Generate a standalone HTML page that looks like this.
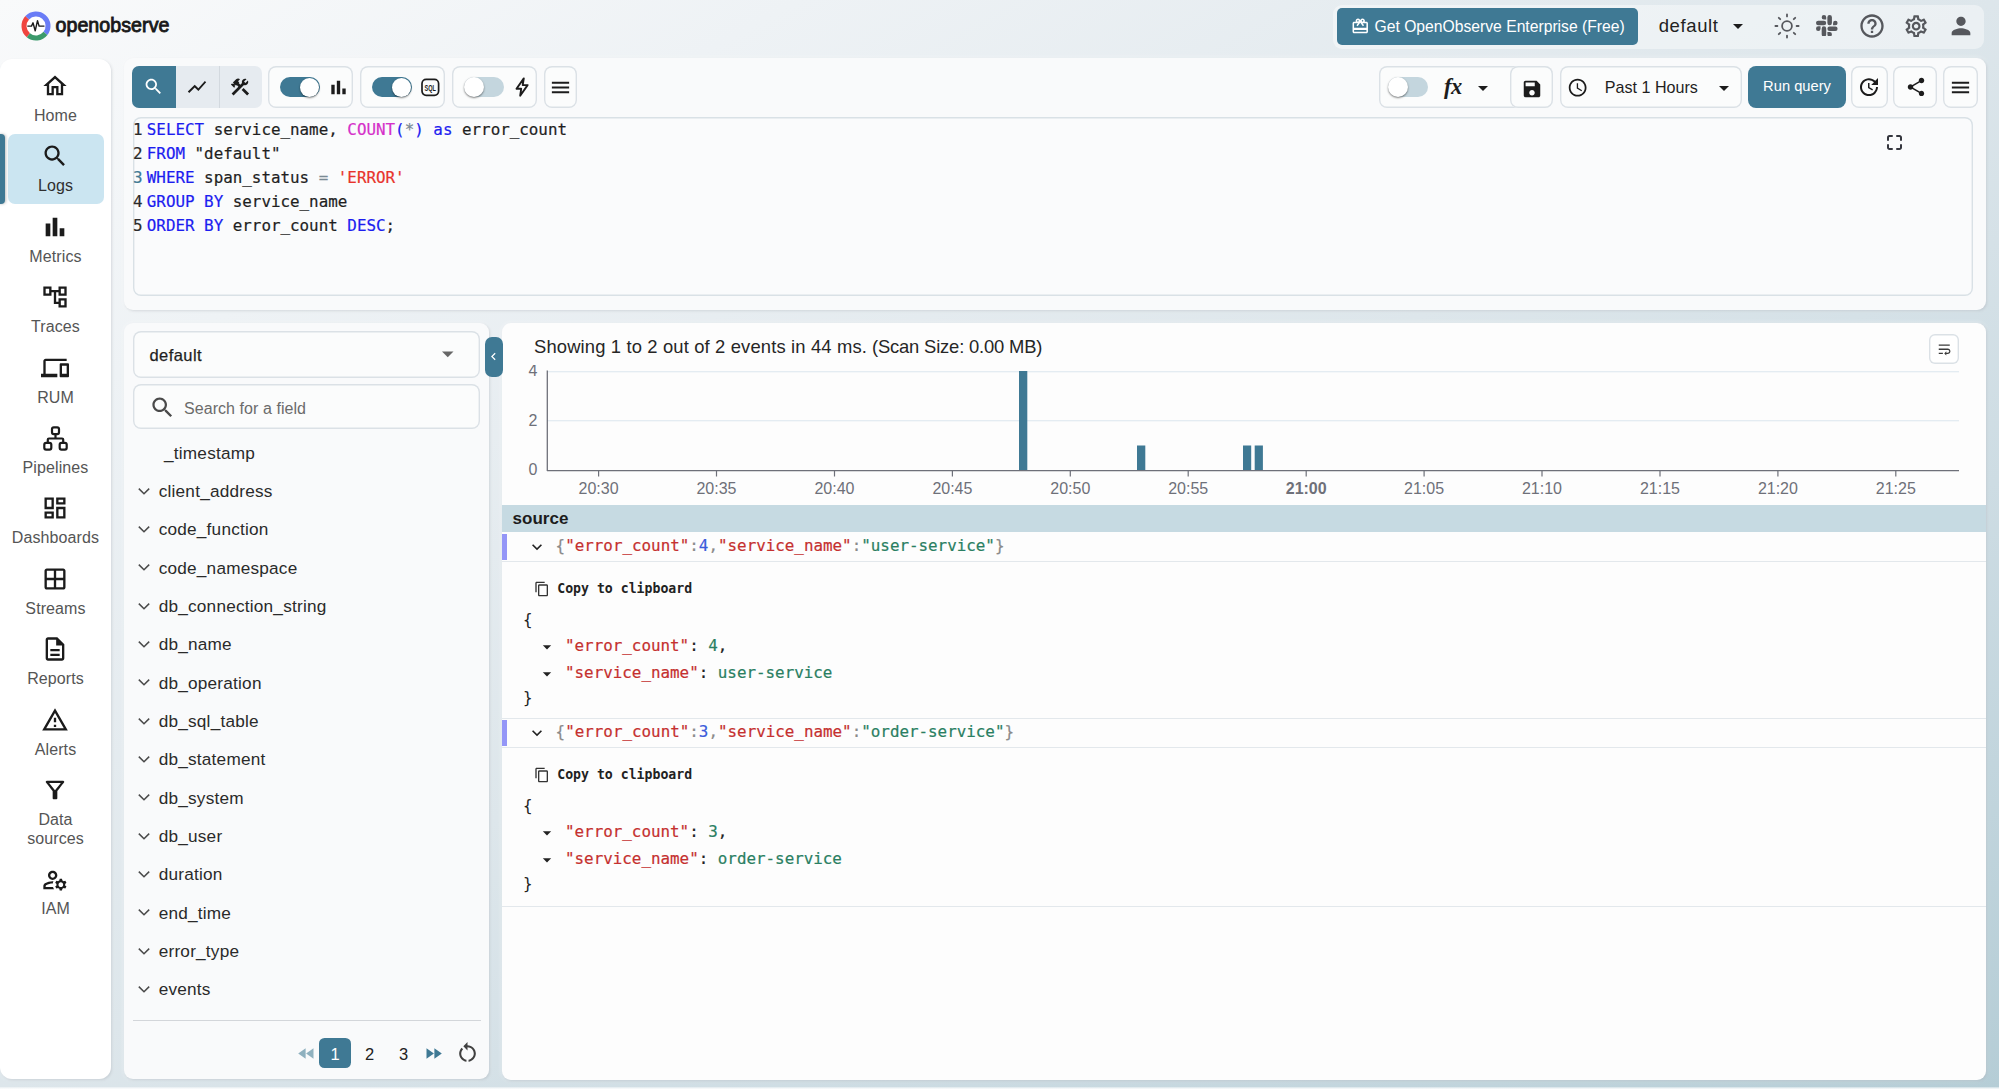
<!DOCTYPE html>
<html lang="en">
<head>
<meta charset="utf-8">
<title>OpenObserve - Logs</title>
<style>
*{box-sizing:border-box;margin:0;padding:0}
html,body{width:1999px;height:1089px;overflow:hidden}
body{font-family:"Liberation Sans",sans-serif;color:#222;position:relative;
 background:linear-gradient(to bottom right,#f9fafb 0%,#eef2f5 20%,#dde6eb 50%,#cddce3 72%,#b5cdd6 100%);}
.abs{position:absolute}
svg{display:block}
.ic{position:absolute;fill:#1c1c1c}
.panel{position:absolute;background:#f9fafb;border-radius:9px;box-shadow:0 0 5px rgba(255,255,255,.55),1px 1px 2.500px rgba(70,85,100,.24)}
.teal{background:#3f7994}
.t{position:absolute;white-space:nowrap;line-height:1}
.mono{font-family:"DejaVu Sans Mono","Liberation Mono",monospace}
/* nav */
.nav-l{position:absolute;left:0;width:111px;text-align:center;font-size:16px;color:#4a4a4a;line-height:19px;letter-spacing:.1px}
.bbox{position:absolute;border:0 solid #d7dee4;box-shadow:inset 0 0 0 1.400px #dbe1e6;border-radius:8px;background:#fbfcfc}
.tog{position:absolute;width:40px;height:20px;border-radius:10px}
.tog.on{background:#3f7994}
.tog.off{background:#c4d6de}
.tog i{position:absolute;top:.5px;width:19px;height:19px;border-radius:50%;background:#fff;box-shadow:0 1px 2px rgba(0,0,0,.5)}
.tog.on i{right:1.500px}
.tog.off i{left:0;top:0;width:20px;height:20px}
.fld{position:absolute;left:158.700px;font-size:17.200px;letter-spacing:.22px;color:#2a2a2a;white-space:nowrap;line-height:20px}
.chev{position:absolute;left:134px;width:20px;height:20px}
.k{color:#c5302f}
.s{color:#2a7f62}
.n{color:#3b5bdb}
.p{color:#8a8a8a}
.ln{display:inline-block;width:13.800px;color:#2a2a2a}
.kw{color:#1d1df0}
.fn{color:#d531c9}
.op{color:#7a8a94}
.str{color:#e8342c}
</style>
</head>
<body>

<!-- ================= HEADER ================= -->
<div id="header">
  <svg class="abs" style="left:20.400px;top:10.250px" width="32" height="32" viewBox="0 0 32 32">
    <circle cx="16" cy="16" r="12" fill="#fff"/>
    <path d="M8.370 25.260 A12 12 0 0 1 7.220 7.820" fill="none" stroke="#f0453f" stroke-width="5"/>
    <path d="M7.220 7.820 A12 12 0 0 1 25.460 23.390" fill="none" stroke="#6a7cf6" stroke-width="5"/>
    <path d="M25.460 23.390 A12 12 0 0 1 8.370 25.260" fill="none" stroke="#3c9a6c" stroke-width="5"/>
    <path d="M7.800 16.100h3.700l1.500-3.300 2.200 8 2.300-10.200 1.600 5.500h4.900" fill="none" stroke="#1a1a1a" stroke-width="1.400" stroke-linejoin="round" stroke-linecap="round"/>
  </svg>
  <div class="t" id="brand" style="left:55.500px;top:15.500px;font-size:19.600px;letter-spacing:.06px;color:#191919;-webkit-text-stroke:.85px #191919">openobserve</div>

  <div class="abs" style="left:1333px;top:4.500px;width:651px;height:44px;border-radius:9px;background:rgba(255,255,255,.42)"></div>
  <div class="abs teal" style="left:1337px;top:8px;width:301px;height:37px;border-radius:5px"></div>
  <svg class="ic" style="left:1350.500px;top:17px;fill:#fff" width="18.500" height="18.500" viewBox="0 0 24 24"><path d="M20 6h-2.180c.11-.31.18-.65.18-1 0-1.660-1.340-3-3-3-1.050 0-1.960.54-2.500 1.350l-.5.670-.5-.680C10.960 2.540 10.050 2 9 2 7.340 2 6 3.340 6 5c0 .35.070.69.18 1H4c-1.110 0-1.990.89-1.990 2L2 19c0 1.110.89 2 2 2h16c1.110 0 2-.89 2-2V8c0-1.110-.89-2-2-2zm-5-2c.55 0 1 .45 1 1s-.45 1-1 1-1-.45-1-1 .45-1 1-1zM9 4c.55 0 1 .45 1 1s-.45 1-1 1-1-.45-1-1 .45-1 1-1zm11 15H4v-2h16v2zm0-5H4V8h5.080L7 10.830 8.620 12 11 8.760l1-1.360 1 1.360L15.380 12 17 10.830 14.920 8H20v6z"/></svg>
  <div class="t" style="left:1374.500px;top:19.300px;font-size:15.700px;color:#fff">Get OpenObserve Enterprise (Free)</div>
  <div class="t" style="left:1658.700px;top:17.100px;font-size:18.500px;letter-spacing:.62px;color:#222">default</div>
  <svg class="ic" style="left:1726px;top:14px" width="24" height="24" viewBox="0 0 24 24"><path d="M7 10l5 5 5-5z"/></svg>
  <!-- sun -->
  <svg class="ic" style="left:1773.500px;top:13.200px;fill:none;stroke:#56585d;stroke-width:1.800;stroke-linecap:round" width="26" height="26" viewBox="0 0 26 26"><circle cx="13" cy="13" r="4.900"/><path d="M13 1.400v2M13 22.600v2M1.400 13h2M22.600 13h2M4.800 4.800l1.400 1.400M19.800 19.800l1.400 1.400M4.800 21.200l1.400-1.400M19.800 6.200l1.400-1.400"/></svg>
  <!-- slack -->
  <svg class="ic" style="left:1816px;top:14.700px;fill:#56585d" width="21.600" height="21.600" viewBox="0 0 24 24"><path d="M5.040 15.160a2.520 2.520 0 1 1-2.520-2.520h2.520zm1.270 0a2.520 2.520 0 0 1 5.040 0v6.320a2.520 2.520 0 1 1-5.040 0zM8.830 5.040a2.520 2.520 0 1 1 2.520-2.520v2.520zm0 1.270a2.520 2.520 0 0 1 0 5.040H2.520a2.520 2.520 0 1 1 0-5.040zM18.960 8.830a2.520 2.520 0 1 1 2.520 2.520h-2.520zm-1.270 0a2.520 2.520 0 0 1-5.040 0V2.520a2.520 2.520 0 1 1 5.040 0zM15.170 18.960a2.520 2.520 0 1 1-2.520 2.520v-2.520zm0-1.270a2.520 2.520 0 0 1 0-5.040h6.320a2.520 2.520 0 1 1 0 5.040z"/></svg>
  <svg class="ic" style="left:1858px;top:12.200px;fill:#56585d" width="28" height="28" viewBox="0 0 24 24"><path d="M11 18h2v-2h-2v2zm1-16C6.480 2 2 6.480 2 12s4.480 10 10 10 10-4.480 10-10S17.520 2 12 2zm0 18c-4.410 0-8-3.590-8-8s3.590-8 8-8 8 3.590 8 8-3.590 8-8 8zm0-14c-2.210 0-4 1.790-4 4h2c0-1.100.9-2 2-2s2 .9 2 2c0 2-3 1.750-3 5h2c0-2.250 3-2.500 3-5 0-2.210-1.790-4-4-4z"/></svg>
  <svg class="ic" style="left:1903px;top:13.200px;fill:#56585d" width="26.300" height="26.300" viewBox="0 0 24 24"><path d="M19.430 12.980c.04-.32.07-.64.07-.98 0-.34-.03-.66-.07-.98l2.110-1.650c.19-.15.24-.42.12-.64l-2-3.460c-.09-.16-.26-.25-.44-.25-.06 0-.12.01-.17.03l-2.490 1c-.52-.4-1.080-.73-1.690-.98l-.38-2.650C14.460 2.180 14.250 2 14 2h-4c-.25 0-.46.18-.49.42l-.38 2.650c-.61.25-1.170.59-1.690.98l-2.490-1c-.06-.02-.12-.03-.18-.03-.17 0-.34.09-.43.25l-2 3.460c-.13.22-.07.49.12.64l2.110 1.650c-.04.32-.07.65-.07.98 0 .33.03.66.07.98l-2.110 1.650c-.19.15-.24.42-.12.64l2 3.460c.09.16.26.25.44.25.06 0 .12-.01.17-.03l2.490-1c.52.4 1.080.73 1.690.98l.38 2.650c.03.24.24.42.49.42h4c.25 0 .46-.18.49-.42l.38-2.650c.61-.25 1.170-.59 1.690-.98l2.490 1c.06.02.12.03.18.03.17 0 .34-.09.43-.25l2-3.460c.12-.22.07-.49-.12-.64l-2.110-1.650zm-1.980-1.710c.04.31.05.52.05.73 0 .21-.02.43-.05.73l-.14 1.130.89.7 1.080.84-.7 1.210-1.270-.51-1.040-.42-.9.68c-.43.32-.84.56-1.250.73l-1.060.43-.16 1.130-.2 1.350h-1.400l-.19-1.350-.16-1.130-1.060-.43c-.43-.18-.83-.41-1.230-.71l-.91-.7-1.060.43-1.270.51-.7-1.210 1.080-.84.89-.7-.14-1.130c-.03-.31-.05-.54-.05-.74s.02-.43.05-.73l.14-1.130-.89-.7-1.080-.84.7-1.210 1.270.51 1.040.42.9-.68c.43-.32.84-.56 1.250-.73l1.060-.43.16-1.130.2-1.350h1.390l.19 1.350.16 1.130 1.060.43c.43.18.83.41 1.230.71l.91.7 1.060-.43 1.270-.51.7 1.210-1.070.85-.89.7.14 1.130zM12 8c-2.210 0-4 1.790-4 4s1.790 4 4 4 4-1.790 4-4-1.790-4-4-4zm0 6c-1.100 0-2-.9-2-2s.9-2 2-2 2 .9 2 2-.9 2-2 2z"/></svg>
  <svg class="ic" style="left:1946.900px;top:11.700px;fill:#56585d" width="28" height="28" viewBox="0 0 24 24"><path d="M12 12c2.210 0 4-1.790 4-4s-1.790-4-4-4-4 1.790-4 4 1.790 4 4 4zm0 2c-2.670 0-8 1.340-8 4v2h16v-2c0-2.660-5.330-4-8-4z"/></svg>
</div>

<!-- ================= LEFT NAV ================= -->
<div id="nav" class="panel" style="left:0;top:58.500px;width:111px;height:1020px;border-radius:12px;background:#fff"></div>
<!--NAVITEMS-->
<div class="abs" style="left:8px;top:134px;width:96px;height:70px;border-radius:7px;background:#cbe5f1"></div>
<div class="abs teal" style="left:-4px;top:134px;width:9px;height:70px;border-radius:4px;box-shadow:1px 0 3px rgba(0,0,0,.25)"></div>
<svg class="ic" style="left:41.2px;top:72.4px;fill:#1b1b1b" width="28" height="28" viewBox="0 0 24 24"><path d="M12 5.69l5 4.5V18h-2v-6H9v6H7v-7.810l5-4.500M12 3L2 12h3v8h6v-6h2v6h6v-8h3L12 3z"/></svg>
<div class="nav-l" style="top:105.7px;color:#555">Home</div>
<svg class="ic" style="left:41.2px;top:142.4px;fill:#1b1b1b" width="28" height="28" viewBox="0 0 24 24"><path d="M15.500 14h-.79l-.28-.27C15.410 12.590 16 11.110 16 9.500 16 5.910 13.090 3 9.500 3S3 5.910 3 9.500 5.910 16 9.500 16c1.610 0 3.090-.59 4.230-1.570l.27.28v.79l5 4.990L20.490 19l-4.990-5zm-6 0C7.010 14 5 11.990 5 9.500S7.010 5 9.500 5 14 7.010 14 9.500 11.990 14 9.500 14z"/></svg>
<div class="nav-l" style="top:175.7px;color:#2f2f2f">Logs</div>
<svg class="ic" style="left:41.2px;top:213.4px;fill:#1b1b1b" width="28" height="28" viewBox="0 0 24 24"><path d="M4 9h4v11H4zM10 4h4v16h-4zM16 13h4v7h-4z"/></svg>
<div class="nav-l" style="top:246.7px;color:#555">Metrics</div>
<svg class="ic" style="left:41.2px;top:283.4px;fill:#1b1b1b" width="28" height="28" viewBox="0 0 24 24"><path d="M22 11V3h-7v3H9V3H2v8h7V8h2v10h4v3h7v-8h-7v3h-2V8h2v3h7zM7 9H4V5h3v4zm10 6h3v4h-3v-4zm0-10h3v4h-3V5z"/></svg>
<div class="nav-l" style="top:316.7px;color:#555">Traces</div>
<svg class="ic" style="left:41.2px;top:354.4px;fill:#1b1b1b" width="28" height="28" viewBox="0 0 24 24"><path d="M4 6h18V4H4c-1.100 0-2 .9-2 2v11H0v3h14v-3H4V6zm19 2h-6c-.55 0-1 .45-1 1v10c0 .55.45 1 1 1h6c.55 0 1-.45 1-1V9c0-.55-.45-1-1-1zm-1 9h-4v-7h4v7z"/></svg>
<div class="nav-l" style="top:387.7px;color:#555">RUM</div>
<svg class="abs" style="left:42.9px;top:425.8px" width="25" height="25" viewBox="0 0 25 25" fill="none" stroke="#1b1b1b" stroke-width="2.200"><rect x="9" y="1.300" width="7" height="6.800" rx="1.800"/><rect x="1.300" y="16.800" width="7" height="6.800" rx="1.800"/><rect x="16.700" y="16.800" width="7" height="6.800" rx="1.800"/><path d="M12.500 8.100v4.400M4.800 16.800v-3.200a1.100 1.100 0 0 1 1.100-1.100h13.200a1.100 1.100 0 0 1 1.100 1.100v3.200"/></svg>
<div class="nav-l" style="top:457.7px;color:#555">Pipelines</div>
<svg class="ic" style="left:41.2px;top:494.4px;fill:#1b1b1b" width="28" height="28" viewBox="0 0 24 24"><path d="M19 5v2h-4V5h4M9 5v6H5V5h4m10 8v6h-4v-6h4M9 17v2H5v-2h4M21 3h-8v6h8V3zM11 3H3v10h8V3zm10 8h-8v10h8V11zm-10 4H3v6h8v-6z"/></svg>
<div class="nav-l" style="top:527.7px;color:#555">Dashboards</div>
<svg class="ic" style="left:41.2px;top:565.4px;fill:#1b1b1b" width="28" height="28" viewBox="0 0 24 24"><path d="M19 3H5c-1.100 0-2 .9-2 2v14c0 1.100.9 2 2 2h14c1.100 0 2-.9 2-2V5c0-1.100-.9-2-2-2zm0 8h-6V5h6v6zm-8-6v6H5V5h6zm-6 8h6v6H5v-6zm8 6v-6h6v6h-6z"/></svg>
<div class="nav-l" style="top:598.7px;color:#555">Streams</div>
<svg class="ic" style="left:41.2px;top:635.4px;fill:#1b1b1b" width="28" height="28" viewBox="0 0 24 24"><path d="M8 16h8v2H8zm0-4h8v2H8zm6-10H6c-1.100 0-2 .9-2 2v16c0 1.100.89 2 1.990 2H18c1.100 0 2-.9 2-2V8l-6-6zm4 18H6V4h7v5h5v11z"/></svg>
<div class="nav-l" style="top:668.7px;color:#555">Reports</div>
<svg class="ic" style="left:41.2px;top:706.4px;fill:#1b1b1b" width="28" height="28" viewBox="0 0 24 24"><path d="M12 5.990L19.530 19H4.470L12 5.990M12 2L1 21h22L12 2zm1 14h-2v2h2v-2zm0-6h-2v4h2v-4z"/></svg>
<div class="nav-l" style="top:739.7px;color:#555">Alerts</div>
<svg class="ic" style="left:41.2px;top:776.4px;fill:#1b1b1b" width="28" height="28" viewBox="0 0 24 24"><path d="M7 6h10l-5.010 6.300L7 6zm-2.750-.39C6.270 8.200 10 13 10 13v6c0 .55.45 1 1 1h2c.55 0 1-.45 1-1v-6s3.720-4.800 5.740-7.390c.51-.66.04-1.610-.79-1.610H5.040c-.83 0-1.300.95-.79 1.610z"/></svg>
<div class="nav-l" style="top:809.7px;color:#555">Data<br>sources</div>
<svg class="ic" style="left:41.2px;top:866.4px;fill:#1b1b1b" width="28" height="28" viewBox="0 0 24 24"><path d="M4 18v-.65c0-.34.16-.66.41-.81C6.100 15.530 8.030 15 10 15c.03 0 .05 0 .08.01.1-.7.3-1.370.59-1.980-.22-.02-.44-.03-.67-.03-2.420 0-4.680.67-6.610 1.820-.88.52-1.390 1.500-1.390 2.530V20h9.260c-.42-.6-.75-1.280-.97-2H4zM10 12c2.210 0 4-1.790 4-4s-1.790-4-4-4-4 1.790-4 4 1.790 4 4 4zm0-6c1.100 0 2 .9 2 2s-.9 2-2 2-2-.9-2-2 .9-2 2-2zM20.750 16c0-.22-.03-.42-.06-.63l1.140-1.010-1-1.730-1.450.49c-.32-.27-.68-.48-1.080-.63L18 11h-2l-.3 1.490c-.4.15-.76.36-1.080.63l-1.450-.49-1 1.730 1.140 1.010c-.03.21-.06.41-.06.63s.03.42.06.63l-1.140 1.010 1 1.730 1.450-.49c.32.27.68.48 1.080.63L16 21h2l.3-1.490c.4-.15.76-.36 1.080-.63l1.450.49 1-1.730-1.140-1.010c.03-.21.06-.41.06-.63zM17 18c-1.100 0-2-.9-2-2s.9-2 2-2 2 .9 2 2-.9 2-2 2z"/></svg>
<div class="nav-l" style="top:898.7px;color:#555">IAM</div>
<!--/NAVITEMS-->

<!-- ================= TOP PANEL ================= -->
<div id="top" class="panel" style="left:124px;top:58px;width:1862px;height:252px"></div>
<!--TOOLBAR-->
<!-- left button group -->
<div class="abs" style="left:132px;top:66px;width:130px;height:42px;border-radius:7px;background:#e6ebf0;overflow:hidden">
  <div class="abs teal" style="left:0;top:0;width:44px;height:42px"></div>
  <div class="abs" style="left:86.500px;top:0;width:1px;height:42px;background:#d3d9df"></div>
</div>
<svg class="ic" style="left:143px;top:76px;fill:#fff" width="21" height="21" viewBox="0 0 24 24"><path d="M15.500 14h-.79l-.28-.27C15.410 12.590 16 11.110 16 9.500 16 5.910 13.090 3 9.500 3S3 5.910 3 9.500 5.910 16 9.500 16c1.610 0 3.090-.59 4.230-1.570l.27.28v.79l5 4.990L20.490 19l-4.990-5zm-6 0C7.010 14 5 11.990 5 9.500S7.010 5 9.500 5 14 7.010 14 9.500 11.990 14 9.500 14z"/></svg>
<svg class="ic" style="left:186px;top:76px" width="22" height="22" viewBox="0 0 24 24"><path d="M3.500 18.490l6-6.010 4 4L22 6.920l-1.410-1.410-7.090 7.970-4-4L2 16.990z"/></svg>
<svg class="ic" style="left:229px;top:76px" width="22" height="22" viewBox="0 0 24 24"><path d="M13.783 15.172l2.121-2.121 5.996 5.996-2.121 2.121zM17.500 10c1.930 0 3.500-1.570 3.500-3.500 0-.58-.16-1.120-.41-1.600l-2.700 2.700-1.490-1.490 2.700-2.700c-.48-.25-1.020-.41-1.600-.41C15.570 3 14 4.570 14 6.500c0 .41.08.8.21 1.160l-1.850 1.850-1.780-1.780.71-.71-1.410-1.410L12 3.490c-1.170-1.170-3.070-1.170-4.240 0L4.220 7.030l1.410 1.410H2.810l-.71.71 3.540 3.540.71-.71V9.150l1.410 1.410.71-.71 1.780 1.780-7.410 7.410 2.120 2.120L16.340 9.790c.36.13.75.21 1.160.21z"/></svg>

<!-- toggle groups -->
<div class="bbox" style="left:267.500px;top:66px;width:85.500px;height:42px"></div>
<div class="tog on" style="left:280px;top:77px"><i></i></div>
<svg class="ic" style="left:327px;top:76px" width="23" height="23" viewBox="0 0 24 24"><path d="M4.500 9.200h3.500V19H4.500zM10.250 5h3.500v14h-3.500zM16 13h3.500v6H16z"/></svg>

<div class="bbox" style="left:359.500px;top:66px;width:85.500px;height:42px"></div>
<div class="tog on" style="left:372px;top:77px"><i></i></div>
<svg class="abs" style="left:420px;top:78px" width="21" height="19" viewBox="0 0 21 19"><rect x="2" y="1.300" width="16.600" height="16" rx="4.200" fill="none" stroke="#1c1c1c" stroke-width="1.700"/><text x="4.600" y="12.500" textLength="11.400" lengthAdjust="spacingAndGlyphs" font-family="Liberation Sans, sans-serif" font-weight="bold" font-size="8.800" fill="#1c1c1c">SQL</text></svg>

<div class="bbox" style="left:451.500px;top:66px;width:85.800px;height:42px"></div>
<div class="tog off" style="left:464px;top:77px"><i></i></div>
<svg class="abs" style="left:510px;top:75px" width="24" height="24" viewBox="0 0 24 24"><path d="M13.800 3.400L6.500 13.800h4.700l-1 6.900 7.400-10.600h-4.900l1.100-6.700z" fill="none" stroke="#1c1c1c" stroke-width="1.900" stroke-linejoin="round"/></svg>

<div class="bbox" style="left:544px;top:66px;width:33.400px;height:42px"></div>
<svg class="ic" style="left:549px;top:76px" width="23" height="23" viewBox="0 0 24 24"><path d="M3 18h18v-2H3v2zm0-5h18v-2H3v2zm0-7v2h18V6H3z"/></svg>

<!-- right side -->
<div class="bbox" style="left:1378.500px;top:66px;width:174.500px;height:42px"></div>
<div class="tog off" style="left:1388px;top:77px"><i></i></div>
<div class="t" style="left:1444px;top:75.500px;font-family:'Liberation Serif',serif;font-style:italic;font-weight:bold;font-size:22.500px;color:#1c1c1c;letter-spacing:-.5px">fx</div>
<svg class="ic" style="left:1471px;top:76px" width="24" height="24" viewBox="0 0 24 24"><path d="M7 10l5 5 5-5z"/></svg>
<div class="bbox" style="left:1510px;top:66px;width:43px;height:42px"></div>
<svg class="ic" style="left:1520.700px;top:77.700px" width="22" height="22" viewBox="0 0 24 24"><path d="M17 3H5c-1.110 0-2 .9-2 2v14c0 1.100.89 2 2 2h14c1.100 0 2-.9 2-2V7l-4-4zm-5 16c-1.660 0-3-1.340-3-3s1.340-3 3-3 3 1.340 3 3-1.340 3-3 3zm3-10H5V5h10v4z"/></svg>

<div class="bbox" style="left:1560px;top:66px;width:182px;height:42px"></div>
<svg class="ic" style="left:1567.400px;top:76.600px" width="21.300" height="21.300" viewBox="0 0 24 24"><path d="M11.990 2C6.470 2 2 6.480 2 12s4.470 10 9.990 10C17.520 22 22 17.520 22 12S17.520 2 11.990 2zM12 20c-4.420 0-8-3.580-8-8s3.580-8 8-8 8 3.580 8 8-3.580 8-8 8zm.5-13H11v6l5.250 3.150.75-1.230-4.500-2.670z"/></svg>
<div class="t" style="left:1604.800px;top:78.700px;font-size:16.100px;color:#1f1f1f">Past 1 Hours</div>
<svg class="ic" style="left:1712px;top:76px" width="24" height="24" viewBox="0 0 24 24"><path d="M7 10l5 5 5-5z"/></svg>

<div class="abs teal" style="left:1748px;top:66px;width:98px;height:42px;border-radius:8px"></div>
<div class="t" style="left:1748px;width:98px;text-align:center;top:79.200px;font-size:14.700px;color:#fff">Run query</div>

<div class="bbox" style="left:1851px;top:66px;width:37px;height:42px"></div>
<svg class="ic" style="left:1857px;top:75.200px" width="24" height="24" viewBox="0 0 24 24"><path d="M21 10.120h-6.780l2.740-2.820c-2.730-2.700-7.150-2.800-9.880-.1-2.730 2.710-2.730 7.080 0 9.790s7.150 2.710 9.880 0C18.320 15.650 19 14.080 19 12.100h2c0 1.980-.88 4.550-2.640 6.290-3.510 3.480-9.210 3.480-12.720 0-3.500-3.470-3.530-9.110-.02-12.580s9.140-3.470 12.650 0L21 3v7.120zM12.500 8v4.250l3.500 2.080-.72 1.210L11 13V8h1.500z"/></svg>
<div class="bbox" style="left:1893.300px;top:66px;width:44.200px;height:42px"></div>
<svg class="ic" style="left:1905px;top:76px" width="22" height="22" viewBox="0 0 24 24"><path d="M18 16.080c-.76 0-1.440.3-1.960.77L8.910 12.700c.05-.23.09-.46.09-.7s-.04-.47-.09-.7l7.050-4.110c.54.5 1.250.81 2.040.81 1.660 0 3-1.340 3-3s-1.340-3-3-3-3 1.340-3 3c0 .24.04.47.09.7L8.040 9.810C7.500 9.310 6.790 9 6 9c-1.660 0-3 1.340-3 3s1.340 3 3 3c.79 0 1.500-.31 2.040-.81l7.120 4.160c-.05.21-.08.43-.08.65 0 1.610 1.310 2.920 2.920 2.920 1.610 0 2.920-1.310 2.920-2.920s-1.310-2.920-2.920-2.920z"/></svg>
<div class="bbox" style="left:1942.900px;top:66px;width:34.700px;height:42px"></div>
<svg class="ic" style="left:1948.700px;top:76px" width="23" height="23" viewBox="0 0 24 24"><path d="M3 18h18v-2H3v2zm0-5h18v-2H3v2zm0-7v2h18V6H3z"/></svg>

<!--/TOOLBAR-->
<!--EDITOR-->
<div class="abs" style="left:132.500px;top:116.500px;width:1840px;height:179.500px;box-shadow:inset 0 0 0 1.400px #d9e1e6;border-radius:8px;background:#fafbfc"></div>
<div class="abs mono" id="code" style="left:133px;top:118.300px;font-size:15.860px;-webkit-text-stroke:.2px;line-height:24px;white-space:pre;color:#1f1f1f"><span class="ln">1</span><span class="kw">SELECT</span> service_name, <span class="fn">COUNT</span><span class="kw">(</span><span class="op">*</span><span class="kw">)</span> <span class="kw">as</span> error_count
<span class="ln">2</span><span class="kw">FROM</span> "default"
<span class="ln" style="color:#3f7994">3</span><span class="kw">WHERE</span> span_status <span class="op">=</span> <span class="str">'ERROR'</span>
<span class="ln">4</span><span class="kw">GROUP BY</span> service_name
<span class="ln">5</span><span class="kw">ORDER BY</span> error_count <span class="kw">DESC</span>;</div>
<svg class="abs" style="left:1887px;top:135.200px" width="15" height="15" viewBox="0 0 15 15" fill="none" stroke="#34363e" stroke-width="2" stroke-linecap="round"><path d="M1 5V2.500a1.500 1.500 0 0 1 1.500-1.500H5M10 1h2.500a1.500 1.500 0 0 1 1.500 1.500V5M14 10v2.500a1.500 1.500 0 0 1-1.500 1.500H10M5 14H2.500a1.500 1.500 0 0 1-1.500-1.500V10"/></svg>

<!--/EDITOR-->

<!-- ================= FIELDS PANEL ================= -->
<div id="fields" class="panel" style="left:124px;top:322.500px;width:364.700px;height:756.200px"></div>
<!--FIELDS-->
<div class="bbox" style="left:132.500px;top:331px;width:347.500px;height:47px;border-radius:8px"></div>
<div class="t" style="left:149.400px;top:347.300px;font-size:16.500px;letter-spacing:.45px;-webkit-text-stroke:.25px;color:#1f1f1f">default</div>
<svg class="ic" style="left:433.800px;top:339.500px;fill:#666" width="27.500" height="27.500" viewBox="0 0 24 24"><path d="M7 10l5 5 5-5z"/></svg>
<div class="bbox" style="left:132.500px;top:384px;width:347.500px;height:45px;border-radius:8px"></div>
<svg class="ic" style="left:149px;top:394px;fill:#4a4a4a" width="27" height="27" viewBox="0 0 24 24"><path d="M15.500 14h-.79l-.28-.27C15.410 12.590 16 11.110 16 9.500 16 5.910 13.090 3 9.500 3S3 5.910 3 9.500 5.910 16 9.500 16c1.610 0 3.090-.59 4.230-1.570l.27.28v.79l5 4.990L20.490 19l-4.990-5zm-6 0C7.010 14 5 11.990 5 9.500S7.010 5 9.500 5 14 7.010 14 9.500 11.990 14 9.500 14z"/></svg>
<div class="t" style="left:184px;top:401px;font-size:16px;letter-spacing:.06px;color:#6b6b6b">Search for a field</div>
<div class="fld" style="left:164px;top:443px">_timestamp</div>
<svg class="chev" style="top:480.6px" viewBox="0 0 20 20"><path d="M4.800 7.600L10 12.800l5.200-5.200" fill="none" stroke="#4a4a4a" stroke-width="1.500"/></svg>
<div class="fld" style="top:481.1px">client_address</div>
<svg class="chev" style="top:518.9px" viewBox="0 0 20 20"><path d="M4.800 7.600L10 12.800l5.200-5.200" fill="none" stroke="#4a4a4a" stroke-width="1.500"/></svg>
<div class="fld" style="top:519.4px">code_function</div>
<svg class="chev" style="top:557.3px" viewBox="0 0 20 20"><path d="M4.800 7.600L10 12.800l5.200-5.200" fill="none" stroke="#4a4a4a" stroke-width="1.500"/></svg>
<div class="fld" style="top:557.8px">code_namespace</div>
<svg class="chev" style="top:595.6px" viewBox="0 0 20 20"><path d="M4.800 7.600L10 12.800l5.200-5.200" fill="none" stroke="#4a4a4a" stroke-width="1.500"/></svg>
<div class="fld" style="top:596.1px">db_connection_string</div>
<svg class="chev" style="top:633.9px" viewBox="0 0 20 20"><path d="M4.800 7.600L10 12.800l5.200-5.200" fill="none" stroke="#4a4a4a" stroke-width="1.500"/></svg>
<div class="fld" style="top:634.4px">db_name</div>
<svg class="chev" style="top:672.2px" viewBox="0 0 20 20"><path d="M4.800 7.600L10 12.800l5.200-5.200" fill="none" stroke="#4a4a4a" stroke-width="1.500"/></svg>
<div class="fld" style="top:672.8px">db_operation</div>
<svg class="chev" style="top:710.6px" viewBox="0 0 20 20"><path d="M4.800 7.600L10 12.800l5.200-5.200" fill="none" stroke="#4a4a4a" stroke-width="1.500"/></svg>
<div class="fld" style="top:711.1px">db_sql_table</div>
<svg class="chev" style="top:748.9px" viewBox="0 0 20 20"><path d="M4.800 7.600L10 12.800l5.200-5.200" fill="none" stroke="#4a4a4a" stroke-width="1.500"/></svg>
<div class="fld" style="top:749.4px">db_statement</div>
<svg class="chev" style="top:787.2px" viewBox="0 0 20 20"><path d="M4.800 7.600L10 12.800l5.200-5.200" fill="none" stroke="#4a4a4a" stroke-width="1.500"/></svg>
<div class="fld" style="top:787.7px">db_system</div>
<svg class="chev" style="top:825.6px" viewBox="0 0 20 20"><path d="M4.800 7.600L10 12.800l5.200-5.200" fill="none" stroke="#4a4a4a" stroke-width="1.500"/></svg>
<div class="fld" style="top:826.1px">db_user</div>
<svg class="chev" style="top:863.9px" viewBox="0 0 20 20"><path d="M4.800 7.600L10 12.800l5.200-5.200" fill="none" stroke="#4a4a4a" stroke-width="1.500"/></svg>
<div class="fld" style="top:864.4px">duration</div>
<svg class="chev" style="top:902.2px" viewBox="0 0 20 20"><path d="M4.800 7.600L10 12.800l5.200-5.200" fill="none" stroke="#4a4a4a" stroke-width="1.500"/></svg>
<div class="fld" style="top:902.7px">end_time</div>
<svg class="chev" style="top:940.6px" viewBox="0 0 20 20"><path d="M4.800 7.600L10 12.800l5.200-5.200" fill="none" stroke="#4a4a4a" stroke-width="1.500"/></svg>
<div class="fld" style="top:941.1px">error_type</div>
<svg class="chev" style="top:978.9px" viewBox="0 0 20 20"><path d="M4.800 7.600L10 12.800l5.200-5.200" fill="none" stroke="#4a4a4a" stroke-width="1.500"/></svg>
<div class="fld" style="top:979.4px">events</div>
<div class="abs" style="left:133px;top:1019.700px;width:348px;height:1px;background:#d3d6da"></div>
<svg class="ic" style="left:295.800px;top:1043px;fill:#8fb1bf" width="21" height="21" viewBox="0 0 24 24"><path d="M11 18V6l-8.500 6 8.500 6zm.5-6l8.500 6V6l-8.500 6z"/></svg>
<div class="abs teal" style="left:319.300px;top:1038.300px;width:31.700px;height:29.300px;border-radius:5.500px"></div>
<div class="t" style="left:319px;width:32px;text-align:center;top:1045.800px;font-size:16.500px;color:#fff">1</div>
<div class="t" style="left:359px;width:21px;text-align:center;top:1045.800px;font-size:16.500px;color:#222">2</div>
<div class="t" style="left:393px;width:21px;text-align:center;top:1045.800px;font-size:16.500px;color:#222">3</div>
<svg class="ic" style="left:423px;top:1043px;fill:#3f7994" width="21" height="21" viewBox="0 0 24 24"><path d="M4 18l8.500-6L4 6v12zm9-12v12l8.500-6L13 6z"/></svg>
<svg class="ic" style="left:455px;top:1040px;fill:#404040" width="25" height="25" viewBox="0 0 24 24"><path d="M12 5V2L8 6l4 4V7c3.310 0 6 2.690 6 6 0 2.970-2.170 5.430-5 5.910v2.020c3.950-.49 7-3.850 7-7.930 0-4.420-3.580-8-8-8zm-6 8c0-1.650.67-3.150 1.760-4.240L6.340 7.340C4.900 8.790 4 10.790 4 13c0 4.080 3.050 7.440 7 7.930v-2.020c-2.830-.48-5-2.940-5-5.910z"/></svg>
<div class="abs teal" style="left:485px;top:337px;width:17.700px;height:40px;border-radius:7px;z-index:5"></div>
<svg class="ic" style="z-index:6;left:486.300px;top:349px;fill:#fff" width="15" height="15" viewBox="0 0 24 24"><path d="M15.410 7.410L14 6l-6 6 6 6 1.410-1.410L10.830 12z"/></svg>
<!--/FIELDS-->

<!-- ================= RESULTS PANEL ================= -->
<div id="results" class="panel" style="left:502px;top:322.500px;width:1484px;height:757.500px;overflow:hidden;background:#fdfdfd"></div>
<!--RESULTS-->
<div class="t" style="left:534px;top:338.300px;font-size:18.400px;letter-spacing:.146px;color:#262626">Showing 1 to 2 out of 2 events in 44 ms.<span style="letter-spacing:-.17px"> (Scan Size: 0.00 MB)</span></div>
<div class="bbox" style="left:1929px;top:334px;width:30px;height:30px;border-radius:6px;background:#fff;border-color:#d9dde1"></div>
<svg class="ic" style="left:1936px;top:340.800px;fill:#3a3a3a" width="16.500" height="16.500" viewBox="0 0 24 24"><path d="M4 19h6v-2H4v2zM20 5H4v2h16V5zm-3 6H4v2h13.250c1.100 0 2 .9 2 2s-.9 2-2 2H15v-2l-3 3 3 3v-2h2c2.210 0 4-1.790 4-4s-1.790-4-4-4z"/></svg>
<svg class="abs" style="left:502px;top:364.800px;overflow:hidden" width="1484" height="139" viewBox="502 364.800 1484 139" font-family="Liberation Sans, sans-serif"><line x1="547" y1="371.5" x2="1959" y2="371.5" stroke="#dbe6ee" stroke-width="1.100"/><line x1="547" y1="420.6" x2="1959" y2="420.6" stroke="#dbe6ee" stroke-width="1.100"/><rect x="1019" y="370.8" width="8.299999999999955" height="99.7" fill="#3f7994"/><rect x="1137" y="445.3" width="8.299999999999955" height="25.2" fill="#3f7994"/><rect x="1243" y="445.3" width="8.200000000000045" height="25.2" fill="#3f7994"/><rect x="1254.7" y="445.3" width="8.200000000000045" height="25.2" fill="#3f7994"/><line x1="547.300" y1="370.200" x2="547.300" y2="470.800" stroke="#6e7079" stroke-width="1.300"/><line x1="547" y1="470.400" x2="1959" y2="470.400" stroke="#6e7079" stroke-width="1.300"/><text x="537.400" y="376.2" text-anchor="end" font-size="16" fill="#6e7079">4</text><text x="537.400" y="426.0" text-anchor="end" font-size="16" fill="#6e7079">2</text><text x="537.400" y="475.2" text-anchor="end" font-size="16" fill="#6e7079">0</text><line x1="598.6" y1="470.500" x2="598.6" y2="476.300" stroke="#6e7079" stroke-width="1.200"/><text x="598.6" y="494.100" text-anchor="middle" font-size="16" fill="#6e7079">20:30</text><line x1="716.5" y1="470.500" x2="716.5" y2="476.300" stroke="#6e7079" stroke-width="1.200"/><text x="716.5" y="494.100" text-anchor="middle" font-size="16" fill="#6e7079">20:35</text><line x1="834.5" y1="470.500" x2="834.5" y2="476.300" stroke="#6e7079" stroke-width="1.200"/><text x="834.5" y="494.100" text-anchor="middle" font-size="16" fill="#6e7079">20:40</text><line x1="952.4" y1="470.500" x2="952.4" y2="476.300" stroke="#6e7079" stroke-width="1.200"/><text x="952.4" y="494.100" text-anchor="middle" font-size="16" fill="#6e7079">20:45</text><line x1="1070.3" y1="470.500" x2="1070.3" y2="476.300" stroke="#6e7079" stroke-width="1.200"/><text x="1070.3" y="494.100" text-anchor="middle" font-size="16" fill="#6e7079">20:50</text><line x1="1188.2" y1="470.500" x2="1188.2" y2="476.300" stroke="#6e7079" stroke-width="1.200"/><text x="1188.2" y="494.100" text-anchor="middle" font-size="16" fill="#6e7079">20:55</text><line x1="1306.2" y1="470.500" x2="1306.2" y2="476.300" stroke="#6e7079" stroke-width="1.200"/><text x="1306.2" y="494.100" font-weight="bold" text-anchor="middle" font-size="16" fill="#6e7079">21:00</text><line x1="1424.1" y1="470.500" x2="1424.1" y2="476.300" stroke="#6e7079" stroke-width="1.200"/><text x="1424.1" y="494.100" text-anchor="middle" font-size="16" fill="#6e7079">21:05</text><line x1="1542.0" y1="470.500" x2="1542.0" y2="476.300" stroke="#6e7079" stroke-width="1.200"/><text x="1542.0" y="494.100" text-anchor="middle" font-size="16" fill="#6e7079">21:10</text><line x1="1660.0" y1="470.500" x2="1660.0" y2="476.300" stroke="#6e7079" stroke-width="1.200"/><text x="1660.0" y="494.100" text-anchor="middle" font-size="16" fill="#6e7079">21:15</text><line x1="1777.9" y1="470.500" x2="1777.9" y2="476.300" stroke="#6e7079" stroke-width="1.200"/><text x="1777.9" y="494.100" text-anchor="middle" font-size="16" fill="#6e7079">21:20</text><line x1="1895.8" y1="470.500" x2="1895.8" y2="476.300" stroke="#6e7079" stroke-width="1.200"/><text x="1895.8" y="494.100" text-anchor="middle" font-size="16" fill="#6e7079">21:25</text></svg>
<div class="abs" style="left:502px;top:504.800px;width:1484px;height:27.400px;background:#c6dae2"></div>
<div class="t" style="left:512.600px;top:510px;font-size:17px;font-weight:bold;color:#1c1c1c">source</div>
<div class="abs" style="left:502px;top:533.6px;width:4.800px;height:26.800px;background:#9496f7"></div>
<svg class="ic" style="left:526.500px;top:537.3px;fill:#222" width="20" height="20" viewBox="0 0 24 24"><path d="M16.590 8.590L12 13.170 7.410 8.590 6 10l6 6 6-6z"/></svg>
<div class="t mono" style="left:555.600px;top:538.4px;font-size:15.870px;-webkit-text-stroke:.2px"><span class="p">{</span><span class="k">"error_count"</span><span class="p">:</span><span class="n">4</span><span class="p">,</span><span class="k">"service_name"</span><span class="p">:</span><span class="s">"user-service"</span><span class="p">}</span></div>
<div class="abs" style="left:502px;top:560.5px;width:1484px;height:1px;background:#e3e8ec"></div>
<svg class="ic" style="left:533.800px;top:580.8px;fill:#333" width="16" height="16" viewBox="0 0 24 24"><path d="M16 1H4c-1.100 0-2 .9-2 2v14h2V3h12V1zm3 4H8c-1.100 0-2 .9-2 2v14c0 1.100.9 2 2 2h11c1.100 0 2-.9 2-2V7c0-1.100-.9-2-2-2zm0 16H8V7h11v14z"/></svg>
<div class="t mono" style="left:557.200px;top:582.4px;font-size:13.200px;font-weight:bold;color:#222">Copy to clipboard</div>
<div class="t mono" style="left:523px;top:612px;font-size:15.800px;color:#222">{</div>
<svg class="ic" style="left:537px;top:636.7px;fill:#222" width="20" height="20" viewBox="0 0 24 24"><path d="M7 10l5 5 5-5z"/></svg>
<div class="t mono" style="left:565px;top:638px;font-size:15.870px;-webkit-text-stroke:.2px;color:#222"><span class="k">"error_count"</span>: <span class="s">4</span>,</div>
<svg class="ic" style="left:537px;top:663.7px;fill:#222" width="20" height="20" viewBox="0 0 24 24"><path d="M7 10l5 5 5-5z"/></svg>
<div class="t mono" style="left:565px;top:665px;font-size:15.870px;-webkit-text-stroke:.2px;color:#222"><span class="k">"service_name"</span>: <span class="s">user-service</span></div>
<div class="t mono" style="left:523px;top:690px;font-size:15.800px;color:#222">}</div>
<div class="abs" style="left:502px;top:718.3px;width:1484px;height:1px;background:#e3e8ec"></div>
<div class="abs" style="left:502px;top:719.6px;width:4.800px;height:26.800px;background:#9496f7"></div>
<svg class="ic" style="left:526.500px;top:723.3px;fill:#222" width="20" height="20" viewBox="0 0 24 24"><path d="M16.590 8.590L12 13.170 7.410 8.590 6 10l6 6 6-6z"/></svg>
<div class="t mono" style="left:555.600px;top:724.4px;font-size:15.870px;-webkit-text-stroke:.2px"><span class="p">{</span><span class="k">"error_count"</span><span class="p">:</span><span class="n">3</span><span class="p">,</span><span class="k">"service_name"</span><span class="p">:</span><span class="s">"order-service"</span><span class="p">}</span></div>
<div class="abs" style="left:502px;top:746.5px;width:1484px;height:1px;background:#e3e8ec"></div>
<svg class="ic" style="left:533.800px;top:766.8px;fill:#333" width="16" height="16" viewBox="0 0 24 24"><path d="M16 1H4c-1.100 0-2 .9-2 2v14h2V3h12V1zm3 4H8c-1.100 0-2 .9-2 2v14c0 1.100.9 2 2 2h11c1.100 0 2-.9 2-2V7c0-1.100-.9-2-2-2zm0 16H8V7h11v14z"/></svg>
<div class="t mono" style="left:557.200px;top:768.4px;font-size:13.200px;font-weight:bold;color:#222">Copy to clipboard</div>
<div class="t mono" style="left:523px;top:798px;font-size:15.800px;color:#222">{</div>
<svg class="ic" style="left:537px;top:822.7px;fill:#222" width="20" height="20" viewBox="0 0 24 24"><path d="M7 10l5 5 5-5z"/></svg>
<div class="t mono" style="left:565px;top:824px;font-size:15.870px;-webkit-text-stroke:.2px;color:#222"><span class="k">"error_count"</span>: <span class="s">3</span>,</div>
<svg class="ic" style="left:537px;top:849.7px;fill:#222" width="20" height="20" viewBox="0 0 24 24"><path d="M7 10l5 5 5-5z"/></svg>
<div class="t mono" style="left:565px;top:851px;font-size:15.870px;-webkit-text-stroke:.2px;color:#222"><span class="k">"service_name"</span>: <span class="s">order-service</span></div>
<div class="t mono" style="left:523px;top:876px;font-size:15.800px;color:#222">}</div>
<div class="abs" style="left:502px;top:905.5px;width:1484px;height:1px;background:#e3e8ec"></div>
<!--/RESULTS-->

<div class="abs" style="left:0;top:1087.300px;width:1999px;height:2px;background:linear-gradient(to bottom,rgba(255,255,255,.3),rgba(255,255,255,.95))"></div>
</body>
</html>
